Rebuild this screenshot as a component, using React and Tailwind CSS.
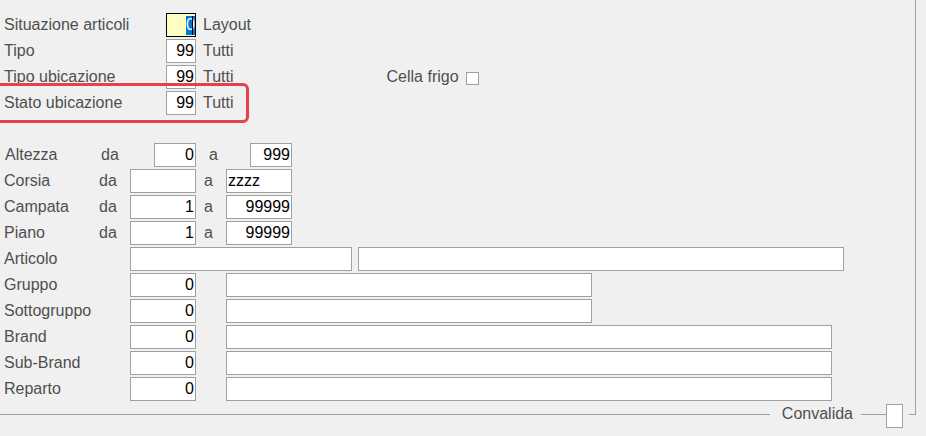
import React from 'react';

const Box = ({ w, value = '', align = 'right', className = '' }) => (
  <div
    className={`h-[24px] shrink-0 border border-[#a0a0a0] bg-white flex items-center text-black leading-none overflow-hidden ${align === 'right' ? 'justify-end pr-[1px]' : 'justify-start pl-[1px]'} ${className}`}
    style={{ width: w }}
  >
    {value}
  </div>
);

const TopRow = ({ label, value, desc, children }) => (
  <div className="h-[24px] flex items-center">
    <div className="w-[166px] pl-[4px] shrink-0">{label}</div>
    <Box w={30} value={value} />
    <div className="pl-[7px]">{desc}</div>
    {children}
  </div>
);

const RangeRow = ({ label, from, to, align = 'right' }) => (
  <div className="h-[24px] flex items-center">
    <div className="w-[99px] pl-[4px] shrink-0">{label}</div>
    <div className="w-[31px] shrink-0">da</div>
    <Box w={66} value={from} />
    <div className="w-[30px] pl-[8px] shrink-0">a</div>
    <Box w={66} value={to} align={align} />
  </div>
);

const CodeRow = ({ label, w2 }) => (
  <div className="h-[24px] flex items-center">
    <div className="w-[130px] pl-[4px] shrink-0">{label}</div>
    <Box w={66} value="0" />
    <div className="w-[30px] shrink-0" />
    <Box w={w2} />
  </div>
);

export default function App() {
  return (
    <div className="w-[926px] h-[436px] bg-[#f0f0f0] overflow-hidden text-[16px] text-[#4f4f4f] font-['Liberation_Sans',Arial,sans-serif]">
      <div className="w-[916px] h-[404px] border-r border-[#a0a0a0] pt-[13px] flex flex-col gap-[2px] relative">
        <div className="h-[24px] flex items-center">
          <div className="w-[166px] pl-[4px] shrink-0">Situazione articoli</div>
          <div className="w-[30px] h-[24px] shrink-0 border border-black bg-[#ffffc4] flex items-center justify-end overflow-hidden leading-none">
            <span className="bg-[#0078d7] text-white mr-[-3px] h-[19px] flex items-center">0</span>
            <span className="w-[1px] h-[19px] bg-black shrink-0 mr-[2px]" />
          </div>
          <div className="pl-[7px]">Layout</div>
        </div>
        <TopRow label="Tipo" value="99" desc="Tutti" />
        <TopRow label="Tipo ubicazione" value="99" desc="Tutti">
          <div className="ml-[153px]">Cella frigo</div>
          <div className="ml-[7px] mt-[2px] w-[13px] h-[13px] border border-[#a0a0a0] bg-white" />
        </TopRow>
        <TopRow label="Stato ubicazione" value="99" desc="Tutti" />

        <div className="h-[24px]" />

        <div className="h-[24px] flex items-center">
          <div className="w-[101px] pl-[5px] shrink-0">Altezza</div>
          <div className="w-[53px] shrink-0">da</div>
          <Box w={42} value="0" />
          <div className="w-[54px] pl-[13px] shrink-0">a</div>
          <Box w={42} value="999" />
        </div>
        <RangeRow label="Corsia" from="" to="zzzz" align="left" />
        <RangeRow label="Campata" from="1" to="99999" />
        <RangeRow label="Piano" from="1" to="99999" />
        <div className="h-[24px] flex items-center">
          <div className="w-[130px] pl-[4px] shrink-0">Articolo</div>
          <Box w={222} />
          <div className="w-[6px] shrink-0" />
          <Box w={486} />
        </div>
        <CodeRow label="Gruppo" w2={366} />
        <CodeRow label="Sottogruppo" w2={366} />
        <CodeRow label="Brand" w2={606} />
        <CodeRow label="Sub-Brand" w2={606} />
        <CodeRow label="Reparto" w2={606} />

        {/* annotation highlight */}
        <div className="absolute left-[-12px] top-[83px] w-[261px] h-[40px] border-[3px] border-[#e5404f] rounded-[6px] pointer-events-none" />
      </div>

      <div className="w-[916px] h-[24px] flex">
        <div className="flex-1 h-px mt-[10px] bg-[#a0a0a0]" />
        <div className="ml-[12px] h-[20px] leading-[20px]">Convalida</div>
        <div className="ml-[8px] w-[25px] h-px mt-[10px] bg-[#a0a0a0]" />
        <div className="w-[17px] h-[24px] border border-[#a0a0a0] bg-white" />
        <div className="ml-[6px] w-[7px] h-[11px] border-b border-r border-[#a0a0a0]" />
      </div>
    </div>
  );
}
